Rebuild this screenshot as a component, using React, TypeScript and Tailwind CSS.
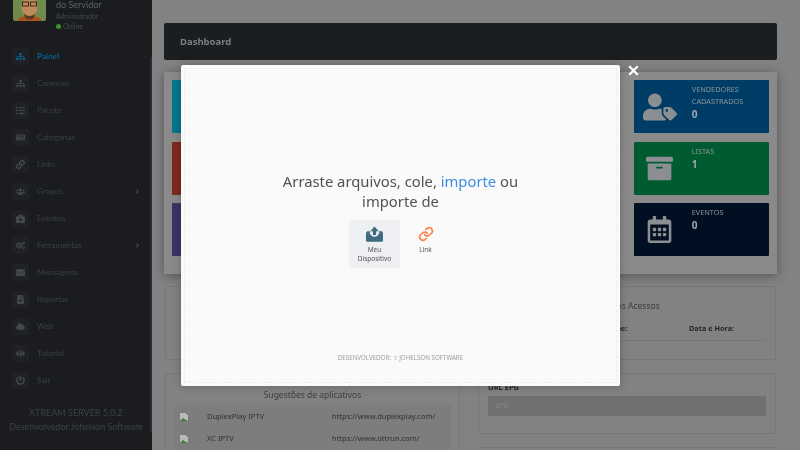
import React from "react";
import { FaSitemap, FaListUl, FaNewspaper, FaLink, FaUsers, FaBriefcaseMedical, FaCogs, FaEnvelope, FaFileAlt, FaCloud, FaEye, FaPowerOff, FaChevronRight, FaUserTag, FaArchive, FaRegCalendarAlt } from "react-icons/fa";

const menu = [
  { t: "Painel", I: FaSitemap, active: true },
  { t: "Conexao", I: FaSitemap },
  { t: "Pacote", I: FaListUl },
  { t: "Categorias", I: FaNewspaper },
  { t: "Links", I: FaLink },
  { t: "Grupos", I: FaUsers, more: true },
  { t: "Eventos", I: FaBriefcaseMedical },
  { t: "Ferramentas", I: FaCogs, more: true },
  { t: "Mensagens", I: FaEnvelope },
  { t: "Importar", I: FaFileAlt },
  { t: "Web", I: FaCloud },
  { t: "Tutorial", I: FaEye },
  { t: "Sair", I: FaPowerOff },
];

function Avatar() {
  return (
    <svg width="33" height="21" viewBox="0 0 33 21" className="shrink-0 rounded-b-[2px]">
      <rect width="33" height="21" fill="#6f8a4a" />
      <path d="M4 21c1-4 7-5 12.500-5S28 17 29 21z" fill="#a8541a" />
      <ellipse cx="16.500" cy="7" rx="8" ry="10" fill="#c08a5c" />
      <path d="M11 13c2 4 9 4 11 0l-1 5c-3 2-6 2-9 0z" fill="#5a3a22" />
      <rect x="9.500" y="2" width="6" height="4" fill="none" stroke="#3a2a1a" strokeWidth="1" />
      <rect x="17.500" y="2" width="6" height="4" fill="none" stroke="#3a2a1a" strokeWidth="1" />
    </svg>
  );
}

function BrokenImage() {
  return (
    <svg width="10" height="10" viewBox="0 0 10 10" className="shrink-0">
      <path d="M.5.5h6l3 3v6h-9z" fill="#b9b9b9" stroke="#6b6b6b" strokeWidth=".7" />
      <path d="M1 9l3-3 2 1.500L9 9z" fill="#3f7a3a" />
    </svg>
  );
}

function StatCard({ bg, Icon, lines, value, iconSize }: { bg: string; Icon: any; lines: string[]; value: string; iconSize: number }) {
  return (
    <div className={`flex h-[53px] ${bg} rounded-[1px]`}>
      <div className="flex w-[52px] shrink-0 items-center justify-center text-[#8b8f92]">
        <Icon style={{ fontSize: iconSize }} />
      </div>
      <div className="ml-[6px] pt-[3px] text-[7.300px] leading-[12px] text-[#8b949a]">
        {lines.map((l) => (
          <div key={l}>{l}</div>
        ))}
        <div className="mt-[1px] text-[10px] font-bold leading-[12px] text-[#a4a8aa]">{value}</div>
      </div>
    </div>
  );
}

export default function App() {
  return (
    <div className="relative flex h-[450px] w-[800px] overflow-hidden bg-[#828282] font-['Noto_Sans',sans-serif] blur-[0.4px]">
      <aside className="relative flex h-[450px] w-[152px] shrink-0 flex-col bg-[#1a1c20] font-['Lato',sans-serif]">
        <div className="flex h-[32px] shrink-0 pl-[13px]">
          <Avatar />
          <div className="ml-[10px]">
            <div className="text-[9px] leading-[10px] text-[#5d6166]">do Servidor</div>
            <div className="mt-[2px] text-[6.800px] leading-[9px] text-[#44484c]">Administrador</div>
            <div className="mt-[1px] flex items-center gap-[2px] text-[6.800px] leading-[9px] text-[#44484c]">
              <span className="h-[5px] w-[5px] rounded-full bg-[#3f8f34]" />
              Online
            </div>
          </div>
        </div>
        <nav className="mt-[11px] flex shrink-0 flex-col">
          {menu.map((m) => (
            <div key={m.t} className="flex h-[27px] shrink-0 items-center pl-[12px] pr-[12px]">
              <span className={`flex h-[17px] w-[17px] items-center justify-center rounded-[2px] bg-[#1f2125] text-[9px] ${m.active ? "text-[#07608c]" : "text-[#44474b]"}`}>
                <m.I />
              </span>
              <span className={`ml-[8px] flex-1 text-[8.200px] ${m.active ? "font-bold text-[#07608c]" : "text-[#3c3f43]"}`}>{m.t}</span>
              {m.more && <FaChevronRight className="text-[5px] text-[#55585c]" />}
            </div>
          ))}
        </nav>
        <div className="mt-[8px] flex h-[35px] shrink-0 flex-col items-center justify-center border-t border-[#1e2024] text-[9px] leading-[14px] text-[#3e4145]">
          <div>XTREAM SERVER 5.0.2</div>
          <div>Desenvolvedor Johelson Software</div>
        </div>
        <div className="absolute left-[150px] top-[57px] h-[375px] w-[2px] bg-[#2a2c31]" />
      </aside>

      <main className="flex min-w-0 flex-1 flex-col pl-[12px] pr-[23px] pt-[23px]">
        <div className="flex h-[37px] shrink-0 items-center rounded-[2px] bg-[#1b1e21] pl-[16px] pt-[1px] text-[9.500px] font-bold text-[#7d7d7d]">Dashboard</div>

        <div className="mt-[12px] grid h-[202px] shrink-0 grid-cols-4 content-start gap-x-[18.700px] gap-y-[8.500px] bg-[#8a8a8a] px-[8px] pt-[8px] shadow-[0_2px_10px_rgba(0,0,0,0.35)]">
          <div className="h-[53px] rounded-[1px] bg-[#00788f]" />
          <div />
          <div />
          <StatCard bg="bg-[#003d66]" Icon={FaUserTag} lines={["VENDEDORES", "CADASTRADOS"]} value="0" iconSize={34} />
          <div className="h-[53px] rounded-[1px] bg-[#7e2a1e]" />
          <div />
          <div />
          <StatCard bg="bg-[#005c30]" Icon={FaArchive} lines={["LISTAS"]} value="1" iconSize={27} />
          <div className="h-[53px] rounded-[1px] bg-[#3c3468]" />
          <div />
          <div />
          <StatCard bg="bg-[#001022]" Icon={FaRegCalendarAlt} lines={["EVENTOS"]} value="0" iconSize={27} />
        </div>

        <div className="mt-[12px] grid shrink-0 grid-cols-[296px_298px] gap-x-[18px]">
          <div className="flex flex-col gap-[13px] pl-[1px]">
            <div className="h-[74px] shrink-0 rounded-[2px] border border-[#777777] bg-[#828282]" />
            <div className="h-[120px] shrink-0 rounded-[2px] border border-[#777777] bg-[#828282] px-[8px]">
              <div className="pt-[13px] text-center text-[8.500px] leading-[16px] text-[#3d3d3d]">Sugestões de aplicativos</div>
              <div className="mt-[2px] bg-[#7d7d7d] pt-[1px] text-[7.500px] text-[#303030]">
                <div className="flex h-[22px] items-center pl-[5px]">
                  <BrokenImage />
                  <span className="ml-[18px] w-[125px]">DuplexPlay IPTV</span>
                  <span>https://www.duplexplay.com/</span>
                </div>
                <div className="flex h-[22px] items-center pl-[5px]">
                  <BrokenImage />
                  <span className="ml-[18px] w-[125px]">XC IPTV</span>
                  <span>https://www.ottrun.com/</span>
                </div>
              </div>
            </div>
          </div>
          <div className="flex flex-col gap-[13px]">
            <div className="h-[74px] shrink-0 rounded-[2px] border border-[#777777] bg-[#828282] px-[9px]">
              <div className="pt-[12px] pl-[107px] text-[8.500px] leading-[14px] text-[#3d3d3d]">Últimos Acessos</div>
              <div className="mt-[9px] flex border-b border-[#777777] pb-[6px] text-[7.300px] font-bold leading-[12px] text-[#262626]">
                <span className="w-[201px] pl-[100px]">Username:</span>
                <span>Data e Hora:</span>
              </div>
            </div>
            <div className="h-[61px] shrink-0 rounded-[2px] border border-[#777777] bg-[#828282] px-[9px]">
              <div className="pt-[7px] text-[7.500px] font-bold leading-[12px] text-[#262626]">URL EPG</div>
              <div className="mt-[3px] flex h-[20px] items-center bg-[#707070] pl-[8px] text-[7px] italic text-[#8a8a8a]">EPG</div>
            </div>
            <div className="h-[40px] shrink-0 rounded-[2px] border border-[#777777] bg-[#828282]" />
          </div>
        </div>
      </main>

      <div className="absolute left-[181px] top-[65px] flex h-[321px] w-[439px] flex-col rounded-[2px] bg-[#fafafa] p-[3px] shadow-[0_0_10px_rgba(0,0,0,0.25)]">
        <div className="flex flex-1 flex-col items-center border border-dashed border-[#ececec]">
          <div className="mt-[102px] w-[260px] text-center font-['Noto_Sans',sans-serif] text-[14.800px] leading-[20px] text-[#525252]">
            Arraste arquivos, cole, <span className="text-[#3b8ee0]">importe</span> ou importe de
          </div>
          <div className="mt-[9px] flex gap-0 pr-[1px]">
            <div className="flex h-[48px] w-[51px] flex-col items-center rounded-[3px] bg-[#edeff2] pt-[6px]">
              <svg width="17" height="16" viewBox="0 0 32 30">
                <path d="M2 10h6l-1 4H5v11h22V14h-2l-1-4h6l2 3v14a2 2 0 01-2 2H2a2 2 0 01-2-2V13z" fill="#3f6b80" />
                <path d="M0 14h8c1 4 4 6 8 6s7-2 8-6h8v13a2 2 0 01-2 2H2a2 2 0 01-2-2z" fill="#3f6b80" />
                <path d="M16 1l8 9h-5v7h-6v-7H8z" fill="#3f6b80" />
              </svg>
              <div className="mt-[3px] text-center text-[6.500px] leading-[9px] text-[#555555]">Meu<br />Dispositivo</div>
            </div>
            <div className="flex h-[48px] w-[51px] flex-col items-center pt-[6px]">
              <svg width="16" height="16" viewBox="0 0 24 24" fill="none" stroke="#ff814f" strokeWidth="2.600" strokeLinecap="round" strokeLinejoin="round">
                <path d="M10 13a5 5 0 0 0 7.500.5l3-3a5 5 0 0 0-7-7l-1.700 1.700" />
                <path d="M14 11a5 5 0 0 0-7.500-.5l-3 3a5 5 0 0 0 7 7l1.700-1.700" />
              </svg>
              <div className="mt-[3px] text-[6.500px] leading-[9px] text-[#555555]">Link</div>
            </div>
          </div>
          <div className="mb-[20px] mt-auto text-[6.200px] leading-[9px] text-[#9c9c9c]">DESENVOLVEDOR: ⇧ JOHELSON SOFTWARE</div>
        </div>
      </div>
      <svg className="absolute left-[628px] top-[65px]" width="11" height="11" viewBox="0 0 11 11" stroke="#ffffff" strokeWidth="2.200" strokeLinecap="square">
        <path d="M2 2l7 7M9 2l-7 7" />
      </svg>
    </div>
  );
}
